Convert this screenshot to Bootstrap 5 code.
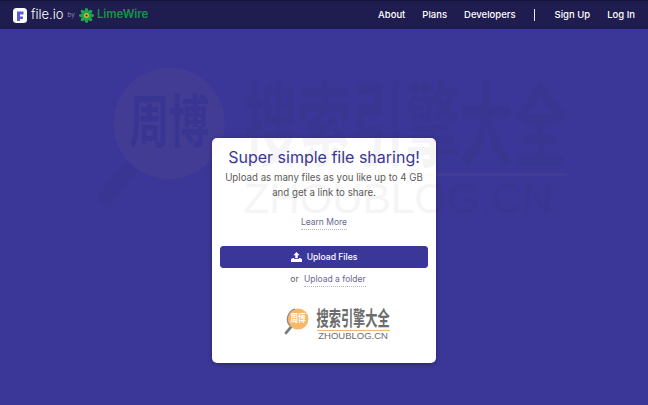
<!DOCTYPE html>
<html lang="en">
<head>
<meta charset="utf-8">
<title>file.io</title>
<link href="https://cdn.jsdelivr.net/npm/bootstrap@5.3.0/dist/css/bootstrap.min.css" rel="stylesheet">
<style>
html,body{height:100%;}
body{background:#3b3798;font-family:Inter,"Liberation Sans",sans-serif;overflow:hidden;display:flex;flex-direction:column;position:relative;}
.topbar{--bs-navbar-nav-link-padding-x:0;background:#1f1c50;height:29px;padding:0 13px 0 13px;flex:none;border-top:1px solid #15133a;}
.brandrow{gap:4px;padding:0;margin:0;color:#fff;font-size:13px;font-weight:300;}
.byword{font-size:6.5px;color:#a9a8c9;margin:1px 0 0 0;}
.limeword{color:#17924a;font-weight:600;font-size:11.4px;margin-left:-1px;}
.topbar .nav-link{color:#fff;font-size:9.5px;font-weight:500;padding:0;}
.linkrow{gap:17px;align-items:center;}
.sepbar{width:1px;height:12px;background:#e8e8f2;margin:0 3px 0 1px;}
.stage{flex:1;padding-top:109px;display:flex;justify-content:center;align-items:flex-start;}
.sharecard{width:224px;height:225px;border:0;border-radius:5px;padding:8px 8px 0;box-shadow:0 1px 4px rgba(20,18,60,.5);text-align:center;}
.sharehead{color:#3b3798;font-size:16px;font-weight:400;line-height:22px;margin:0 0 3px;white-space:nowrap;}
.sharetext{color:#5b5b5b;font-size:9.7px;line-height:14.5px;margin:0;white-space:nowrap;}
.softlink{color:#69688f;text-decoration:none;font-size:8.5px;border-bottom:1px dotted #b5b5c5;padding-bottom:2px;}
.learnrow{margin:12px 0 0;line-height:14px;}
.uploadbtn{--bs-btn-bg:#3b3798;--bs-btn-border-color:#3b3798;--bs-btn-hover-bg:#3b3798;--bs-btn-hover-border-color:#3b3798;--bs-btn-padding-y:0;--bs-btn-font-size:8.6px;--bs-btn-border-radius:3px;height:22px;margin-top:17px;gap:5px;font-weight:500;}
.orrow{margin-top:4px;padding-left:8px;font-size:8.5px;color:#5b5b5b;line-height:14px;}
.orrow .softlink{margin-left:3px;}
.zblogo{display:flex;align-items:flex-start;line-height:1;}
.zbicon{width:2.05em;height:2.25em;flex:none;}
.zbwords{display:flex;flex-direction:column;margin-left:.62em;}
.zbcjk{font-family:"Noto Sans CJK SC",sans-serif;font-weight:700;font-size:1em;line-height:1.65;white-space:nowrap;color:#6c6c6c;display:block;transform:scaleY(1.7);}
.zbline{height:.07em;background:#f5b566;margin:.16em 0 .02em;}
.zblatin{font-family:"Liberation Sans",sans-serif;font-size:.78em;white-space:nowrap;color:#6c6c6c;line-height:1;}
.smallmark{font-size:12.2px;justify-content:flex-start;margin:6px 0 0 64px;}
.bigmark{position:absolute;left:95px;top:75px;font-size:54px;opacity:.04;pointer-events:none;z-index:5;}
.bigmark .zbicon{width:2.45em;height:2.7em;margin-top:-10px;}
.bigmark .zbwords{margin-left:.3em;}
.bigmark .zbcjk,.bigmark .zblatin{color:#222;}
.bigmark .zbicon text{fill:#111;}
</style>
</head>
<body>
<nav class="navbar navbar-expand topbar">
  <a class="navbar-brand d-flex align-items-center brandrow" href="#">
    <svg width="14" height="15" viewBox="0 0 14 15" aria-hidden="true"><rect width="14" height="15" rx="3.5" fill="#fff"/><path d="M4 3.5h6.5v3H7v2h3v2.5H7V13H4z" fill="#5a5cd8"/></svg>
    <span>file.io</span>
    <span class="byword">by</span>
    <svg width="15" height="15" viewBox="0 0 30 30" aria-hidden="true"><g fill="#1fa54f"><ellipse cx="15" cy="6" rx="3.6" ry="6"/><ellipse cx="15" cy="24" rx="3.6" ry="6"/><ellipse cx="6" cy="15" rx="6" ry="3.6"/><ellipse cx="24" cy="15" rx="6" ry="3.6"/><ellipse cx="8.5" cy="8.5" rx="3.6" ry="6" transform="rotate(-45 8.5 8.5)"/><ellipse cx="21.5" cy="21.5" rx="3.6" ry="6" transform="rotate(-45 21.5 21.5)"/><ellipse cx="21.5" cy="8.5" rx="3.6" ry="6" transform="rotate(45 21.5 8.5)"/><ellipse cx="8.5" cy="21.5" rx="3.6" ry="6" transform="rotate(45 8.5 21.5)"/></g><circle cx="15" cy="15" r="5" fill="#c9c32a"/><circle cx="15" cy="15" r="2" fill="#1f1c50"/></svg>
    <span class="limeword">LimeWire</span>
  </a>
  <ul class="navbar-nav ms-auto linkrow">
    <li class="nav-item"><a class="nav-link" href="#">About</a></li>
    <li class="nav-item"><a class="nav-link" href="#">Plans</a></li>
    <li class="nav-item"><a class="nav-link" href="#">Developers</a></li>
    <li class="sepbar"></li>
    <li class="nav-item"><a class="nav-link" href="#">Sign Up</a></li>
    <li class="nav-item"><a class="nav-link" href="#">Log In</a></li>
  </ul>
</nav>
<main class="stage">
  <div class="card sharecard">
    <h1 class="sharehead">Super simple file sharing!</h1>
    <p class="sharetext">Upload as many files as you like up to 4 GB</p>
    <p class="sharetext">and get a link to share.</p>
    <p class="learnrow"><a class="softlink" href="#">Learn More</a></p>
    <button type="button" class="btn btn-primary uploadbtn d-flex align-items-center justify-content-center w-100">
      <svg width="11" height="10" viewBox="0 0 11 10" aria-hidden="true"><path d="M5.5 0 8.6 3.2H6.7v3H4.3v-3H2.4z" fill="#fff"/><path d="M0 7.2c1.2-1 2.4-1.2 3.2-1.1v.9h4.6v-.9c.8-.1 2 .1 3.2 1.1V10H0z" fill="#fff"/></svg>
      <span>Upload Files</span>
    </button>
    <p class="orrow">or <a class="softlink" href="#">Upload a folder</a></p>
    <div class="zblogo smallmark">
      <svg class="zbicon" viewBox="0 0 100 110" aria-hidden="true"><path d="M30 74 8 100" stroke="#7a7a7a" stroke-width="11" stroke-linecap="round"/><circle cx="56" cy="44" r="42" fill="#f6b767"/><path d="M24 72A42 42 0 0 1 44 4" fill="none" stroke="#8a8a8a" stroke-width="5"/><text transform="translate(56 58) scale(.95 1.35)" text-anchor="middle" font-family="Noto Sans CJK SC" font-weight="700" font-size="32" fill="#fff">周博</text></svg>
      <div class="zbwords"><span class="zbcjk">搜索引擎大全</span><span class="zbline"></span><span class="zblatin">ZHOUBLOG.CN</span></div>
    </div>
  </div>
</main>
<div class="zblogo bigmark">
  <svg class="zbicon" viewBox="0 0 100 110" aria-hidden="true"><path d="M30 74 8 100" stroke="#111" stroke-width="11" stroke-linecap="round"/><circle cx="56" cy="44" r="42" fill="#ffb040"/><text transform="translate(56 58) scale(.95 1.35)" text-anchor="middle" font-family="Noto Sans CJK SC" font-weight="700" font-size="32">周博</text></svg>
  <div class="zbwords"><span class="zbcjk">搜索引擎大全</span><span class="zbline"></span><span class="zblatin">ZHOUBLOG.CN</span></div>
</div>
<script src="https://cdn.jsdelivr.net/npm/bootstrap@5.3.0/dist/js/bootstrap.bundle.min.js"></script>
</body>
</html>
